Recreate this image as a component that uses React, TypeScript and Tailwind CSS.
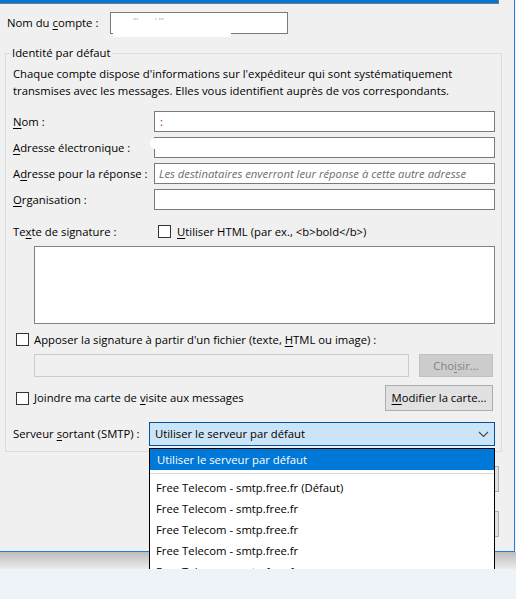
import React from 'react';

// Small Windows-style checkbox (unchecked)
function Check() {
  return <span className="inline-block w-[13px] h-[13px] shrink-0 border border-[#333333] bg-white" />;
}

type RowProps = {
  label: React.ReactNode;
  children?: React.ReactNode;
};

// Label on the left, text box filling the rest
function FieldRow({ label, children }: RowProps) {
  return (
    <div className="flex items-center h-[21px]">
      <span className="w-[141px] shrink-0 whitespace-nowrap">{label}</span>
      <div className="flex-1 h-full border border-[#7a7a7a] bg-white flex items-center px-[4px] overflow-hidden whitespace-nowrap">
        {children}
      </div>
    </div>
  );
}

const servers = [
  'Free Telecom - smtp.free.fr (Défaut)',
  'Free Telecom - smtp.free.fr',
  'Free Telecom - smtp.free.fr',
  'Free Telecom - smtp.free.fr',
  'Free Telecom - smtp.free.fr',
];

export default function App() {
  return (
    <div className="relative w-[516px] h-[599px] overflow-hidden bg-[#eef2f9] text-[11.3px] leading-[16px] text-black font-['Open_Sans',sans-serif]">
      {/* Dialog window */}
      <div className="relative w-[515px] h-[552px] bg-[#f0f0f0] border-r border-b border-[#2a7ad2]">
        <div className="w-[499px] h-[4px] bg-[#0078d7] border-b border-r border-[#7a7a7a]" />

        {/* Account name */}
        <div className="mt-[8px] flex items-center h-[22px] pl-[7px]">
          <span className="w-[103px] shrink-0">
            Nom du <u className="underline-offset-2">c</u>ompte :
          </span>
          <div className="relative w-[178px] h-full border border-[#7a7a7a] bg-white">
            <span className="absolute left-[2px] top-[18px] w-[118px] h-[6px] rounded-full bg-white" />
            <span className="absolute left-[22px] top-[3px] text-[8px] leading-[8px] text-[#9a9a9a]">''' &nbsp;&nbsp;&nbsp;&nbsp;&nbsp;&nbsp; ' '''</span>
          </div>
        </div>

        {/* Default identity group */}
        <fieldset className="mt-[11px] ml-[5px] w-[497px] border border-[#dcdcdc] pl-[7px] pr-[6px] pb-[5px]">
          <legend className="-ml-[2px] px-[1px] leading-[16px]">Identité par défaut</legend>

          <p className="mt-[4px] leading-[17px]">
            Chaque compte dispose d'informations sur l'expéditeur qui sont systématiquement
            <br />
            transmises avec les messages. Elles vous identifient auprès de vos correspondants.
          </p>

          <div className="mt-[12px] flex flex-col gap-[5px]">
            <FieldRow label={<><u className="underline-offset-2">N</u>om :</>}>
              <span className="text-[#8b1a1a] pl-[1px]">:</span>
            </FieldRow>
            <div className="relative">
              <FieldRow label={<><u className="underline-offset-2">A</u>dresse électronique :</>} />
              <span className="absolute left-[137px] top-[1px] w-[12px] h-[11px] rounded-full bg-white" />
            </div>
            <FieldRow label={<>A<u className="underline-offset-2">d</u>resse pour la réponse :</>}>
              <span className="italic text-[#6d6d6d]">Les destinataires enverront leur réponse à cette autre adresse</span>
            </FieldRow>
            <FieldRow label={<><u className="underline-offset-2">O</u>rganisation :</>} />
          </div>

          {/* Signature */}
          <div className="mt-[13px] flex items-center h-[17px]">
            <span className="w-[145px] shrink-0">
              Te<u className="underline-offset-2">x</u>te de signature :
            </span>
            <Check />
            <span className="ml-[6px]">
              <u className="underline-offset-2">U</u>tiliser HTML (par ex., &lt;b&gt;bold&lt;/b&gt;)
            </span>
          </div>
          <div className="mt-[6px] ml-[21px] h-[78px] border border-[#828282] bg-white" />

          <div className="mt-[7px] flex items-center h-[17px] pl-[3px]">
            <Check />
            <span className="ml-[5px]">
              Apposer la signature à partir d'un fichier (texte, <u className="underline-offset-2">H</u>TML ou image) :
            </span>
          </div>
          <div className="mt-[6px] ml-[21px] flex items-center h-[23px] gap-[10px]">
            <div className="w-[375px] h-full border border-[#cccccc] bg-[#f0f0f0]" />
            <div className="w-[74px] h-full border border-[#bfbfbf] bg-[#cccccc] text-[#838383] flex items-center justify-center">
              Cho<u className="underline-offset-2">i</u>sir...
            </div>
          </div>

          {/* Business card */}
          <div className="mt-[8px] flex items-center h-[26px] pl-[3px]">
            <Check />
            <span className="ml-[5px]">
              Joindre ma carte de <u className="underline-offset-2">v</u>isite aux messages
            </span>
            <div className="ml-auto mr-[2px] w-[108px] h-full border border-[#adadad] bg-[#e1e1e1] flex items-center justify-center">
              <span>
                <u className="underline-offset-2">M</u>odifier la carte...
              </span>
            </div>
          </div>

          {/* Outgoing server */}
          <div className="mt-[11px] flex items-center h-[24px]">
            <span className="w-[136px] shrink-0">
              Serveur <u className="underline-offset-2">s</u>ortant (SMTP) :
            </span>
            <div className="flex-1 h-full border border-[#005499] bg-[#cce4f7] flex items-center pl-[5px] pr-[4px]">
              <span className="flex-1">Utiliser le serveur par défaut</span>
              <svg width="11" height="7" viewBox="0 0 11 7" className="mr-[1px]">
                <polyline points="1,1 5.5,5.5 10,1" fill="none" stroke="#4a4a4a" strokeWidth="1.1" />
              </svg>
            </div>
          </div>
        </fieldset>

        {/* Dialog buttons, mostly hidden behind the open list */}
        <div className="mt-[14px] pr-[15px] flex flex-col items-end gap-[19px]">
          <div className="w-[140px] h-[26px] border border-[#adadad] bg-[#e1e1e1]" />
          <div className="w-[140px] h-[26px] border border-[#adadad] bg-[#e1e1e1]" />
        </div>
      </div>

      {/* Window shadow */}
      <div className="w-full h-[17px] bg-gradient-to-b from-[#bdbdbd] to-[#ececec]" />

      {/* Open SMTP server list */}
      <div className="absolute left-[149px] top-[448px] w-[346px] h-[121px] z-10 border-x border-t border-black bg-white overflow-hidden">
        <div className="h-[21px] bg-[#0078d7] text-white flex items-center pl-[7px]">Utiliser le serveur par défaut</div>
        <div className="h-[7px] flex items-center">
          <div className="w-full h-[1px] bg-[#d7d7d7]" />
        </div>
        {servers.map((s, i) => (
          <div key={i} className="h-[21px] flex items-center pl-[6px] whitespace-nowrap">
            {s}
          </div>
        ))}
      </div>
    </div>
  );
}
